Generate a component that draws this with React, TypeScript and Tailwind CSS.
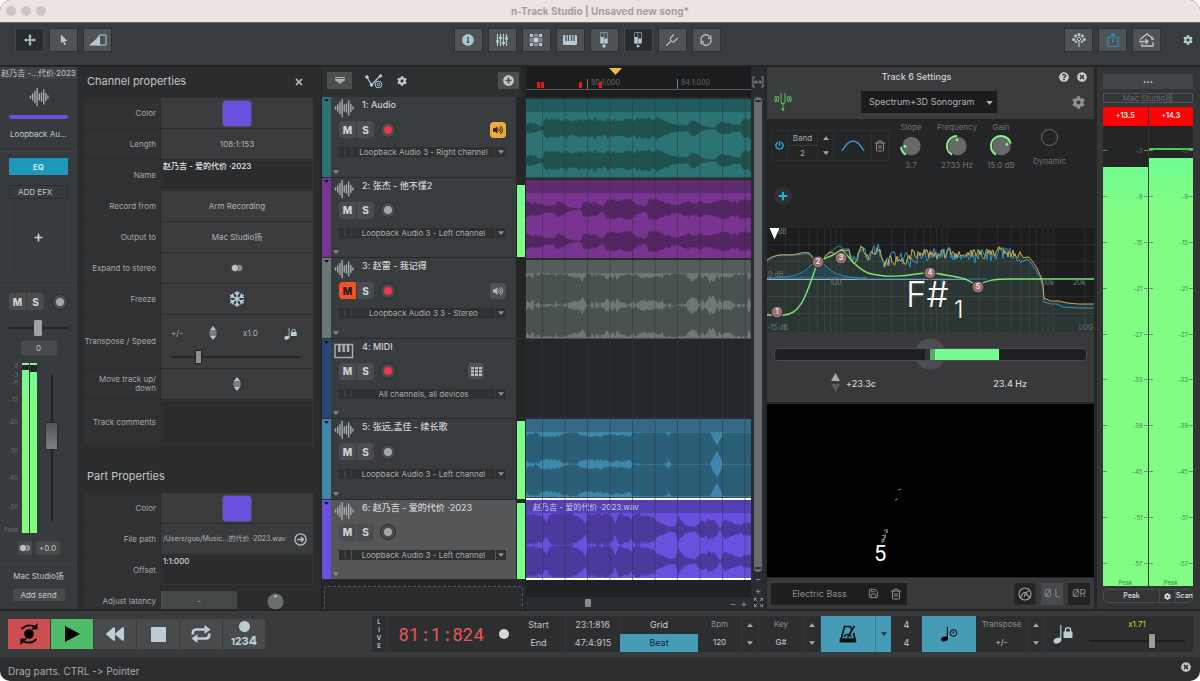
import React, { useState } from 'react';
import {
  FaBackward,
  FaCog,
  FaInfoCircle,
  FaPlus,
  FaPlusCircle,
  FaPowerOff,
  FaQuestionCircle,
  FaRegSnowflake,
  FaTimes,
  FaTimesCircle,
  FaVolumeUp,
} from 'react-icons/fa';
import { Expand, Save, Trash2 } from 'lucide-react';

type Envelope = [number, number][];

interface Track {
  id: number;
  name: string;
  input: string;
  stripe: string;
  muted?: boolean;
  armed?: boolean;
  selected?: boolean;
  midi?: boolean;
  monitor?: 'on' | 'off';
  level: number;
  clip?: {
    head: string;
    body: string;
    wave: string;
    label?: string;
    rough: number;
    envelope: Envelope;
  };
}

const tracks: Track[] = [
  {
    id: 1,
    name: 'Audio',
    input: 'Loopback Audio 3 - Right channel',
    stripe: 'bg-[#2c7473]',
    armed: true,
    monitor: 'on',
    level: 0,
    clip: {
      head: '#225d5d',
      body: '#2b7473',
      wave: '#1f5150',
      rough: 0.5,
      envelope: [[0, 6], [8, 6], [17, 2], [18, 9], [26, 12], [36, 11], [45, 8], [52, 11], [60, 9], [70, 11], [86, 10], [100, 12], [116, 10], [130, 12], [138, 9], [145, 6], [152, 4], [162, 4], [165, 9], [172, 7], [178, 3], [185, 1], [190, 1], [193, 7], [200, 7], [210, 4], [215, 3], [218, 11], [226, 12]],
    },
  },
  {
    id: 2,
    name: '张杰 - 他不懂2',
    input: 'Loopback Audio 3 - Left channel',
    stripe: 'bg-[#793592]',
    level: 90,
    clip: {
      head: '#5d2c70',
      body: '#783490',
      wave: '#532562',
      rough: 0.5,
      envelope: [[0, 10], [8, 8], [20, 4], [28, 4], [32, 9], [38, 6], [45, 2], [50, 1], [55, 1], [58, 8], [65, 8], [70, 8], [75, 4], [78, 4], [82, 11], [92, 10], [102, 13], [110, 7], [116, 4], [120, 4], [124, 12], [135, 10], [145, 6], [152, 5], [160, 8], [170, 10], [180, 8], [190, 10], [200, 10], [212, 9], [226, 11]],
    },
  },
  {
    id: 3,
    name: '赵雷 - 我记得',
    input: 'Loopback Audio 3 3 - Stereo',
    stripe: 'bg-[#6a7775]',
    muted: true,
    armed: true,
    monitor: 'off',
    level: 0,
    clip: {
      head: '#555c5c',
      body: '#6b7876',
      wave: '#4a5251',
      rough: 0.5,
      envelope: [[0, 16], [10, 18], [20, 18], [30, 17], [40, 18], [52, 13], [58, 11], [62, 19], [75, 18], [85, 13], [95, 16], [108, 17], [116, 12], [125, 13], [135, 16], [150, 19], [160, 17], [168, 8], [175, 17], [188, 8], [193, 18], [205, 12], [212, 18], [226, 17]],
    },
  },
  {
    id: 4,
    name: 'MIDI',
    input: 'All channels, all devices',
    stripe: 'bg-[#2b4677]',
    armed: true,
    midi: true,
    level: 0,
  },
  {
    id: 5,
    name: '张远,孟佳 - 续长歌',
    input: 'Loopback Audio 3 - Left channel',
    stripe: 'bg-[#3f88ab]',
    level: 98,
    clip: {
      head: '#346a88',
      body: '#3f88ab',
      wave: '#2b5e77',
      rough: 0.26,
      envelope: [[0, 14], [12, 16], [16, 11], [30, 13], [50, 18], [60, 12], [75, 13], [90, 15], [105, 12], [107, 19], [138, 18], [143, 13], [148, 20], [184, 20], [189, 8], [192, 3], [196, 11], [201, 20], [226, 19]],
    },
  },
  {
    id: 6,
    name: '赵乃吉 - 爱的代价 ·2023',
    input: 'Loopback Audio 3 - Left channel',
    stripe: 'bg-[#6b50e0]',
    selected: true,
    level: 95,
    clip: {
      head: '#563fb3',
      body: '#6a50df',
      wave: '#4c399d',
      label: '赵乃吉 - 爱的代价 ·2023.wav',
      rough: 0.5,
      envelope: [[0, 19], [14, 17], [20, 10], [25, 17], [40, 20], [52, 17], [60, 5], [62, 17], [80, 20], [90, 10], [95, 20], [105, 12], [112, 19], [125, 16], [131, 10], [136, 7], [144, 3], [150, 4], [153, 16], [160, 5], [170, 2], [175, 9], [185, 11], [191, 9], [195, 1], [200, 11], [210, 6], [216, 4], [222, 10], [226, 6]],
    },
  },
];

// small seeded generator so the waveforms stay the same on every render
const seeded = (seed: number) => {
  let s = seed;
  return () => {
    s = (s * 16807) % 2147483647;
    return s / 2147483647;
  };
};

const envelopeAt = (env: Envelope, x: number) => {
  const i = env.findIndex(([ex]) => ex >= x);
  if (i <= 0) return env[i === 0 ? 0 : env.length - 1][1];
  const [x0, y0] = env[i - 1];
  const [x1, y1] = env[i];
  return y0 + ((y1 - y0) * (x - x0)) / (x1 - x0);
};

const wavePath = (env: Envelope, rough: number, seed: number, center: number) => {
  const rand = seeded(seed * 7919);
  const top: string[] = [];
  const bottom: string[] = [];
  let group = rand();
  for (let x = 0; x <= 226; x += 1) {
    if (rand() > 0.6) group = rand() ** 2;
    const amp = envelopeAt(env, x) * (1.03 - rough * (0.6 * group + 0.4 * rand()));
    const up = Math.min(15.7, amp);
    const down = Math.min(15.7, amp * (0.92 + 0.16 * rand()));
    top.push(`${x},${(center - up).toFixed(1)}`);
    bottom.unshift(`${x},${(center + down).toFixed(1)}`);
  }
  return `M${top.join('L')}L${bottom.join('L')}Z`;
};

const spectrumPath = (seed: number, lift: number, rough: number) => {
  const rand = seeded(seed);
  const points: string[] = [];
  let last = 0;
  for (let x = 82; x <= 256; x += 1) {
    const swell = x < 125 ? 4 * Math.sin(x / 2.6) : 0;
    const dip = x > 115 && x < 145 ? 5 : 0;
    const drift = x > 225 ? -1 : 0;
    last = last * 0.4 + (rand() - 0.5) * rough;
    points.push(`${x},${(26 + lift + dip + swell + drift + last).toFixed(1)}`);
  }
  return points.join('L');
};

const yellowLine = `M0,32C8,26 14,27 22,27C30,27 36,23 42,25C47,29 49,36 53,36C57,32 60,22 66,25C70,27 73,18 77,23L${spectrumPath(41, 0, 9)}L262,29L266,34L270,40L274,49L276,56L277,70L284,73L292,73L300,75L312,76L327,76`;
const blueLine = `M0,33C8,27 14,26 22,27C30,28 36,25 42,26C46,29 49,36 53,36C57,32 60,23 65,23C69,20 73,15 76,21L${spectrumPath(97, 1, 13)}L260,31L264,35L268,41L273,49L276,60L277,74L284,76L290,76L296,79L312,80L327,80`;

const Triangle = ({ down = false, className = 'w-2 h-1' }: { down?: boolean; className?: string }) => (
  <svg viewBox="0 0 8 5" className={className} fill="currentColor">
    <path d={down ? 'M0 0h8L4 5z' : 'M0 5h8L4 0z'} />
  </svg>
);

const WaveIcon = ({ className = 'w-5 h-5' }: { className?: string }) => (
  <svg viewBox="0 0 20 20" className={className} stroke="#a9abac" strokeWidth="1.4" strokeLinecap="round">
    <path d="M1.5 9v2M3.7 7v6M5.9 4.5v11M8.1 1.5v17M10.3 7v6M12.5 6v8M14.7 3v14M16.9 6.5v7M18.9 9v2" />
  </svg>
);

const StereoIcon = () => (
  <svg viewBox="0 0 12 8" className="w-3 h-2">
    <circle cx="8" cy="4" r="3.2" fill="#8b8d8e" />
    <circle cx="4" cy="4" r="3.6" fill="#bfc1c2" stroke="#3b3c3e" strokeWidth="0.6" />
  </svg>
);

const UpDownIcon = () => (
  <svg viewBox="0 0 8 14" className="w-2 h-[14px]" fill="#b4c4cb">
    <path d="M4 0l3.4 4.4H.6zM.4 5.4h7.2v1H.4zM.4 7.6h7.2v1H.4zM4 14l3.4-4.4H.6z" />
  </svg>
);

const NoteLock = ({ className }: { className: string }) => (
  <svg viewBox="0 0 20 20" className={className} fill="#bccdd5">
    <ellipse cx="4.4" cy="16.6" rx="4" ry="2.8" transform="rotate(-20 4.4 16.6)" />
    <path d="M7.2 1h1.2v15H7.2z" />
    <rect x="10.5" y="7.6" width="9" height="6.4" rx="0.8" />
    <path d="M12.4 8V6.2a2.6 2.6 0 0 1 5.2 0V8" fill="none" stroke="#bccdd5" strokeWidth="1.4" />
  </svg>
);

const TunerIcon = () => (
  <svg viewBox="0 0 18 18" className="w-[18px] h-[18px]" fill="none" stroke="#55b65a" strokeWidth="1.1">
    <path d="M7 0v8.5a2 2 0 0 0 4 0V0M9 11v5" />
    <circle cx="9" cy="16.5" r="0.9" fill="#55b65a" />
    <path d="M4 3.2q1.4 2.8 0 5.6M14 3.2q-1.4 2.8 0 5.6M1.8 3Q-.2 6 1.800 9M16.200 3q2 3 0 6M3.400 3q-2 3 0 6M14.600 3q2 3 0 6" />
  </svg>
);

const toolIcons: Record<string, React.ReactNode> = {
  move: (
    <svg viewBox="0 0 14 14" className="w-3 h-3" fill="#b3cbd4">
      <path d="M7 0l2.200 2.800H4.800zM7 14l2.200-2.800H4.800zM0 7l2.800-2.200v4.400zM14 7l-2.800-2.200v4.400z" />
      <path d="M7 3v8M3 7h8" stroke="#b3cbd4" strokeWidth="0.8" />
      <circle cx="7" cy="7" r="1.700" />
      <circle cx="4" cy="7" r="1.300" />
      <circle cx="10" cy="7" r="1.300" />
      <circle cx="7" cy="4" r="1.300" />
      <circle cx="7" cy="10" r="1.300" />
    </svg>
  ),
  pointer: (
    <svg viewBox="0 0 10 14" className="w-2 h-3" fill="#b3cbd4">
      <path d="M1 0v11.500l2.700-2.500 2 4.500 1.800-.8-2-4.400h3.700z" />
    </svg>
  ),
  fade: (
    <svg viewBox="0 0 18 12" className="w-[18px] h-3">
      <path d="M0 11.500L11 1.500v10z" fill="#b3cbd4" />
      <path d="M9 2.500L11 1h6v10H9z" fill="none" stroke="#b3cbd4" />
    </svg>
  ),
  info: <FaInfoCircle className="w-3 h-3 text-[#a9c9d6]" />,
  mixer: (
    <svg viewBox="0 0 12 12" className="w-3 h-3" stroke="#b3cbd4" strokeWidth="1.200">
      <path d="M1.500 0v12M4.500 0v12M7.500 0v12M10.500 0v12" />
      <path d="M0 7.500h3M3 4h3M6 9h3M9 4.500h3" strokeWidth="2" />
    </svg>
  ),
  grid: (
    <svg viewBox="0 0 12 12" className="w-3 h-3" fill="#b3cbd4">
      <path d="M0 0h3v3H0zM9 0h3v3H9zM3.500 3.500h5v5h-5zM0 9h3v3H0zM9 9h3v3H9z" />
      <path d="M4 0h4v2.500H4zM0 4h2.500v4H0zM9.500 4H12v4H9.500zM4 9.500h4V12H4z" fillOpacity="0.55" />
    </svg>
  ),
  piano: (
    <svg viewBox="0 0 14 12" className="w-[14px] h-3">
      <path d="M.5 1.500h13v9H.5z" fill="#b3cbd4" stroke="#b3cbd4" />
      <path d="M3 1v6M5.500 1v6M8.500 1v6M11 1v6" stroke="#505254" strokeWidth="1.300" />
    </svg>
  ),
  recMeter: (
    <svg viewBox="0 0 10 16" className="w-[10px] h-4">
      <path d="M1.500.5h7v11h-7zM5 .5v6" fill="none" stroke="#8a9aa0" strokeWidth="0.8" />
      <path d="M1.500 5h3.300v6H1.500zM5.200 6.500h3.300V11H5.200z" fill="#b3cbd4" />
      <circle cx="5" cy="14" r="1.700" fill="#b3cbd4" />
    </svg>
  ),
  playMeter: (
    <svg viewBox="0 0 10 16" className="w-[10px] h-4">
      <path d="M1.500.5h7v11h-7zM5 .5v6" fill="none" stroke="#8a9aa0" strokeWidth="0.8" />
      <path d="M1.500 5h3.300v6H1.500zM5.200 6.500h3.300V11H5.200z" fill="#b3cbd4" />
      <path d="M3.800 12.300l3.600 1.700-3.600 1.700z" fill="#b3cbd4" />
    </svg>
  ),
  fork: (
    <svg viewBox="0 0 12 12" className="w-3 h-3" fill="none" stroke="#b3cbd4" strokeWidth="1.200">
      <path d="M.5 11.500L4.900 7.100M7.800.5L4.600 3.800Q3.700 5 4.900 7.100Q7 8.300 8.200 7.400L11.500 4.200" />
    </svg>
  ),
  loop: (
    <svg viewBox="0 0 12 12" className="w-3 h-3" fill="none" stroke="#b3cbd4" strokeWidth="1.200">
      <path d="M1.500 7.500a4.700 4.700 0 0 1 8-4.800M10.500 4.500a4.700 4.700 0 0 1-8 4.800" />
      <path d="M10.800 1.500v2.700H8M1.200 10.500V7.800H4" />
    </svg>
  ),
  tree: (
    <svg viewBox="0 0 14 14" className="w-[14px] h-[14px]" fill="#b3cbd4">
      <circle cx="7" cy="1.700" r="1.600" />
      <circle cx="3.500" cy="3" r="1.500" />
      <circle cx="10.500" cy="3" r="1.500" />
      <circle cx="1.700" cy="6.500" r="1.600" />
      <circle cx="12.300" cy="6.500" r="1.600" />
      <circle cx="4" cy="8.800" r="1.200" />
      <circle cx="10" cy="8.800" r="1.200" />
      <circle cx="7" cy="6" r="1.700" fill="none" stroke="#b3cbd4" />
      <path d="M6.400 8h1.200v6H6.400z" />
    </svg>
  ),
  share: (
    <svg viewBox="0 0 12 16" className="w-3 h-4" fill="none" stroke="#2a91bd" strokeWidth="1.200">
      <path d="M4 5.500H1v9h10v-9H8M6 10.500V1.500M3.500 4L6 1.500 8.500 4" />
    </svg>
  ),
  house: (
    <svg viewBox="0 0 16 14" className="w-4 h-[14px]" fill="none" stroke="#b9c6cb" strokeWidth="1.300">
      <path d="M1 6.500L8 .9l7 5.600M3 10v3h11V9M13 3.500V7M0 8.500h9M6.500 6L9 8.500 6.500 11" />
    </svg>
  ),
};

const ToolButton = ({ icon, label, active }: { icon: string; label: string; active?: boolean }) => (
  <button
    aria-label={label}
    className={`w-[29px] h-6 flex items-center justify-center border ${
      active ? 'bg-[#2a2b2d] border-[#45484a]' : 'bg-[#505254] border-[#2e3133]'
    }`}
  >
    {toolIcons[icon]}
  </button>
);

const RecordDot = ({ armed, label }: { armed?: boolean; label: string }) => (
  <button aria-label={label} className="w-4 h-4 rounded-full border border-[#2a2b2c] bg-[#4a4b4c] flex items-center justify-center">
    <span className={`w-2 h-2 rounded-full ${armed ? 'bg-[#ee3552]' : 'bg-[#a5a6a7]'}`} />
  </button>
);

const MuteSolo = ({ muted }: { muted?: boolean }) => (
  <div className="flex gap-px">
    <button className={`w-[17px] h-[17px] rounded-l-sm font-extrabold text-[10px] leading-4 ${muted ? 'bg-[#ee5522] text-[#231410]' : 'bg-[#4a4c4d] text-[#cfd2d3]'}`}>
      M
    </button>
    <button className="w-[17px] h-[17px] rounded-r-sm font-extrabold text-[10px] leading-4 bg-[#4a4c4d] text-[#cfd2d3]">S</button>
  </div>
);

const PropertyRow = ({ label, tall = 'h-[30px]', plain, children }: { label: string; tall?: string; plain?: boolean; children: React.ReactNode }) => (
  <div className={`flex gap-px shrink-0 ${tall}`}>
    <div className="w-[76px] bg-[#303133] flex items-center justify-end pr-1 text-right leading-[9px] text-[#a7a9aa]">{label}</div>
    <div className={`flex-1 min-w-0 flex items-center justify-center text-[#b2b4b5] ${plain ? '' : 'bg-[#3a3b3d]'}`}>{children}</div>
  </div>
);

const Toolbar = () => (
  <div className="h-[45px] shrink-0 bg-[#393c3e] border-t border-[#6a6867] border-b-2 border-b-[#222425] flex items-center justify-between pl-[15px] pr-[7px] pb-[9px]">
    <div className="flex gap-[5px] flex-1">
      <ToolButton icon="move" label="Move" active />
      <ToolButton icon="pointer" label="Select" />
      <ToolButton icon="fade" label="Fade" />
    </div>
    <div className="flex gap-[5px] mr-[34px]">
      <ToolButton icon="info" label="Info" />
      <ToolButton icon="mixer" label="Mixer" />
      <ToolButton icon="grid" label="Step grid" />
      <ToolButton icon="piano" label="Piano" />
      <ToolButton icon="recMeter" label="Recording level" />
      <ToolButton icon="playMeter" label="Playback level" active />
      <ToolButton icon="fork" label="Tuner" />
      <ToolButton icon="loop" label="Loops" />
    </div>
    <div className="flex flex-1 justify-end items-center gap-[5px]">
      <ToolButton icon="tree" label="Community" />
      <ToolButton icon="share" label="Share" />
      <ToolButton icon="house" label="Export" />
      <button aria-label="Settings" className="w-5 ml-[7px] flex justify-end text-[#b3cbd4]">
        <FaCog className="w-[10px] h-[10px]" />
      </button>
    </div>
  </div>
);

const ChannelStrip = () => (
  <aside className="w-[78px] shrink-0 bg-[#373b3d] flex flex-col items-center text-[8px] text-[#c6c8c9] border-r border-[#2c2e2f]">
    <div className="w-full h-3 bg-[#404345] leading-3 text-center whitespace-nowrap overflow-hidden">赵乃吉 -...代价·2023</div>
    <WaveIcon className="w-5 h-5 mt-2" />
    <div className="w-[59px] h-1 mt-2 rounded-sm bg-[#6b50e0]" />
    <div className="mt-[10px] leading-[10px]">Loopback Au...</div>
    <div className="w-full h-px mt-3 bg-[#3f4244]" />
    <button className="w-[59px] h-[17px] mt-[6px] bg-[#1e98b9] font-bold text-[#c8ecf5]">EQ</button>
    <button className="w-[59px] h-[14px] mt-[10px] border border-[#2b2e30] text-left pl-2">ADD EFX</button>
    <button aria-label="Add effect" className="w-[59px] h-[78px] border border-t-0 border-[#3d4042] flex items-center justify-center text-[#c5d5db]">
      <FaPlus className="w-[9px] h-[9px]" />
    </button>
    <div className="w-full h-px mt-2 bg-[#3f4244]" />
    <div className="flex items-center gap-2 mt-[7px]">
      <MuteSolo />
      <RecordDot label="Record arm" />
    </div>
    <input
      type="range"
      aria-label="Pan"
      defaultValue={49}
      className="w-[60px] h-[18px] mt-[9px] appearance-none bg-transparent bg-[linear-gradient(#222,#222)] bg-[length:100%_2px] bg-center bg-no-repeat [&::-webkit-slider-thumb]:appearance-none [&::-webkit-slider-thumb]:w-2 [&::-webkit-slider-thumb]:h-4 [&::-webkit-slider-thumb]:rounded-[1px] [&::-webkit-slider-thumb]:bg-[#a0a1a2]"
    />
    <div className="w-9 h-[14px] mt-1 bg-[#484b4c] text-center leading-[14px]">0</div>
    <div className="flex flex-1 min-h-0 w-full pt-2">
      <div className="relative w-5 text-[6px] leading-[6px] text-[#6b7072] text-right pr-[2px]">
        <span className="absolute right-[2px] top-0">0</span>
        <span className="absolute right-[2px] top-[5%]">-3</span>
        <span className="absolute right-[2px] top-[10%]">-6</span>
        <span className="absolute right-[2px] top-[20%]">-12</span>
        <span className="absolute right-[2px] top-[33%]">-20</span>
        <span className="absolute right-[2px] top-[50%]">-30</span>
        <span className="absolute right-[2px] top-[66%]">-40</span>
        <span className="absolute right-[2px] top-[83%]">-50</span>
        <span className="absolute right-[2px] bottom-0">Peak</span>
      </div>
      <div className="flex gap-px ml-[2px]">
        <div className="w-[7px] bg-[#242525] border-t-2 border-[#80fb8f] flex flex-col justify-end">
          <div className="h-[97%] bg-linear-to-b from-[#72fb98] via-[#82fd83] via-20% to-[#82fd83]" />
        </div>
        <div className="w-[7px] bg-[#242525] border-t-2 border-[#80fb8f] flex flex-col justify-end">
          <div className="h-[96%] bg-linear-to-b from-[#72fb98] via-[#82fd83] via-20% to-[#82fd83]" />
        </div>
      </div>
      <input
        type="range"
        aria-label="Volume"
        defaultValue={60}
        className="w-[13px] mt-3 mb-3 ml-[8px] [writing-mode:vertical-lr] [direction:rtl] appearance-none bg-transparent bg-[linear-gradient(#222,#222)] bg-[length:2px_100%] bg-center bg-no-repeat [&::-webkit-slider-thumb]:appearance-none [&::-webkit-slider-thumb]:w-[13px] [&::-webkit-slider-thumb]:h-7 [&::-webkit-slider-thumb]:rounded-[1px] [&::-webkit-slider-thumb]:border [&::-webkit-slider-thumb]:border-[#2b2b2b] [&::-webkit-slider-thumb]:bg-linear-to-b [&::-webkit-slider-thumb]:from-[#525455] [&::-webkit-slider-thumb]:to-[#7e8081]"
      />
    </div>
    <div className="flex gap-1 mt-2">
      <button aria-label="Stereo" className="w-[14px] h-[14px] bg-[#47494a] flex items-center justify-center"><StereoIcon /></button>
      <div className="w-6 h-[14px] bg-[#47494a] leading-[14px] text-center">+0.0</div>
    </div>
    <div className="w-full h-px mt-2 bg-[#3f4244]" />
    <div className="mt-[7px] leading-[10px]">Mac Studio扬</div>
    <button className="w-[52px] h-3 mt-2 mb-2 bg-[#484b4c] leading-3">Add send</button>
  </aside>
);

const PropertiesPanel = () => (
  <section className="w-[243px] shrink-0 bg-[#2b2c2e] pl-[6px] pr-2 overflow-hidden text-[8px]">
    <div className="h-[31px] flex items-center justify-between px-[3px] pb-[2px]">
      <h2 className="text-[11px] text-[#c3c5c6]">Channel properties</h2>
      <button aria-label="Close channel properties" className="pr-[6px] text-[#adafb0]"><FaTimes className="w-[10px] h-[10px]" /></button>
    </div>
    <div className="flex flex-col gap-px">
      <PropertyRow label="Color">
        <button aria-label="Channel color" className="w-[30px] h-[27px] border border-[#505254] bg-[#6b50e0] rounded-sm" />
      </PropertyRow>
      <PropertyRow label="Length">108:1:153</PropertyRow>
      <PropertyRow label="Name" plain>
        <textarea aria-label="Name" defaultValue="赵乃吉 - 爱的代价 ·2023" className="w-full h-full resize-none overflow-hidden px-px border border-[#333436] leading-[10px] text-[#e6e8e9] font-medium" />
      </PropertyRow>
      <PropertyRow label="Record from">Arm Recording</PropertyRow>
      <PropertyRow label="Output to">Mac Studio扬</PropertyRow>
      <PropertyRow label="Expand to stereo"><StereoIcon /></PropertyRow>
      <PropertyRow label="Freeze">
        <button aria-label="Freeze" className="text-[#b4d0da]"><FaRegSnowflake className="w-4 h-4" /></button>
      </PropertyRow>
      <PropertyRow label="Transpose / Speed" tall="h-[53px]">
        <div className="w-full pl-[10px] pr-[13px] pt-[7px] flex flex-col">
          <div className="flex items-center justify-between pr-[3px] h-4">
            <span>+/-</span>
            <UpDownIcon />
            <span>x1.0</span>
            <NoteLock className="w-[13px] h-[13px]" />
          </div>
          <input
            type="range"
            aria-label="Speed"
            defaultValue={20}
            className="w-full h-4 mt-2 appearance-none bg-transparent bg-[linear-gradient(#242526,#242526)] bg-[length:100%_2px] bg-center bg-no-repeat [&::-webkit-slider-thumb]:appearance-none [&::-webkit-slider-thumb]:w-[7px] [&::-webkit-slider-thumb]:h-[14px] [&::-webkit-slider-thumb]:rounded-[1px] [&::-webkit-slider-thumb]:border [&::-webkit-slider-thumb]:border-[#222] [&::-webkit-slider-thumb]:bg-[#8f9091]"
          />
        </div>
      </PropertyRow>
      <PropertyRow label="Move track up/ down"><UpDownIcon /></PropertyRow>
      <PropertyRow label="Track comments" tall="h-[45px]" plain>
        <textarea aria-label="Track comments" className="w-full h-full resize-none border border-[#333436]" />
      </PropertyRow>
    </div>
    <h2 className="mt-[23px] mb-[9px] h-4 leading-4 px-[3px] text-[11px] text-[#c3c5c6]">Part Properties</h2>
    <div className="flex flex-col gap-px">
      <PropertyRow label="Color">
        <button aria-label="Part color" className="w-[30px] h-[27px] border border-[#505254] bg-[#6b50e0] rounded-sm" />
      </PropertyRow>
      <PropertyRow label="File path">
        <div className="flex w-full items-center justify-between pl-[2px] pr-[6px] whitespace-nowrap">
          <span className="text-[7px]">/Users/guo/Music...的代价 ·2023.wav</span>
          <button aria-label="Open file location">
            <svg viewBox="0 0 14 14" className="block w-[13px] h-[13px]" fill="none" stroke="#b9c3c7" strokeWidth="1.400">
              <circle cx="7" cy="7" r="6" />
              <path d="M3.500 7h6.500M7.500 4.300L10.300 7 7.500 9.700" />
            </svg>
          </button>
        </div>
      </PropertyRow>
      <PropertyRow label="Offset" plain>
        <textarea aria-label="Offset" defaultValue="1:1:000" className="w-full h-full resize-none overflow-hidden px-px border border-[#333436] leading-[10px] text-[#e6e8e9]" />
      </PropertyRow>
      <PropertyRow label="Adjust latency" plain>
        <div className="w-1/2 h-6 mt-1 bg-[#454849] text-center leading-5">-</div>
        <div className="w-1/2 flex justify-center">
          <svg viewBox="0 0 18 18" className="w-[17px] h-[17px]">
            <circle cx="9" cy="9" r="8.500" fill="#6b6d6e" />
            <circle cx="9" cy="3.500" r="1.300" fill="#7bf08a" />
          </svg>
        </div>
      </PropertyRow>
    </div>
  </section>
);

const TrackHeader = ({ track }: { track: Track }) => (
  <div className="flex flex-1 min-h-0 border-b border-[#292b2c]">
    <div className={`w-[9px] shrink-0 flex flex-col items-center pt-[2px] ${track.stripe}`}>
      <span className="text-[#14181b]"><Triangle down className="w-[5px] h-[3px]" /></span>
    </div>
    <div className={`flex-1 min-w-0 flex flex-col pl-[2px] pr-1 ${track.selected ? 'bg-[#555658]' : 'bg-[#393c3e]'}`}>
      <div className="flex gap-2 h-[22px] pl-px">
        {track.midi ? (
          <svg viewBox="0 0 20 16" className="w-5 h-4 mt-1" fill="none" stroke="#a9abac" strokeWidth="1.500">
            <rect x="1" y="1.500" width="17.500" height="13" />
            <path d="M5.300 2v7M9.700 2v7M14 2v7" strokeWidth="2.500" />
          </svg>
        ) : (
          <WaveIcon className="w-5 h-5 mt-px" />
        )}
        <span className="text-[9px] leading-4 font-medium text-[#d0d2d3] whitespace-nowrap">{track.id}: {track.name}</span>
      </div>
      <div className="flex items-center h-[21px] pl-[6px] pr-[6px]">
        <MuteSolo muted={track.muted} />
        <span className="flex ml-[6px]"><RecordDot armed={track.armed} label={`Arm track ${track.id}`} /></span>
        {track.monitor && (
          <button
            aria-label="Input monitor"
            className={`ml-auto w-4 h-4 rounded-sm flex items-center justify-center ${track.monitor === 'on' ? 'bg-[#ecae36] text-[#33230a]' : 'bg-[#4f5152] text-[#b6b8b9]'}`}
          >
            <FaVolumeUp className="w-[10px] h-[10px]" />
          </button>
        )}
        {track.midi && (
          <button aria-label="Step sequencer" className="ml-auto mr-[22px] w-4 h-4 rounded-sm bg-[#4f5152] flex items-center justify-center">
            <svg viewBox="0 0 11 9" className="w-[11px] h-[9px]" fill="#bcbebf">
              <path d="M0 0h3v2.300H0zM4 0h3v2.300H4zM8 0h3v2.300H8zM0 3.300h3v2.300H0zM4 3.300h3v2.300H4zM8 3.300h3v2.300H8zM0 6.600h3v2.300H0zM4 6.600h3v2.300H4zM8 6.600h3v2.300H8z" />
            </svg>
          </button>
        )}
      </div>
      <div className="flex h-[10px] mt-[7px] ml-[6px] mr-[6px] gap-px text-[8px] leading-[10px] text-[#abadae]">
        <button aria-label="Channel config" className="w-3 bg-[#2f3031] text-[6px] leading-[9px] text-[#77797a] text-center">|</button>
        <button className="flex-1 bg-[#2f3031] whitespace-nowrap">{track.input}</button>
        <button aria-label="Choose input" className="w-[10px] bg-[#2f3031] flex items-center justify-center text-[#8e9091]"><Triangle down className="w-[6px] h-[4px]" /></button>
      </div>
      <span className="mt-auto mb-[3px] text-[#8a8c8d]"><Triangle down className="w-[6px] h-[4px]" /></span>
    </div>
    <div className="w-[9px] shrink-0 pl-px bg-[#242625] flex flex-col justify-end">
      {track.level > 0 && (
        <div className="bg-linear-to-b from-[#78fc92] to-[#82fd83]" style={{ height: `${track.level}%` }} />
      )}
    </div>
  </div>
);

const TrackList = () => (
  <section className="w-[204px] shrink-0 bg-[#242627] flex flex-col border-l border-[#1f2122]">
    <div className="h-[30px] shrink-0 flex items-center bg-[#2d3031] pl-[5px] pr-[2px] pb-[3px] mr-1">
      <button aria-label="Track menu" className="w-[25px] h-[17px] bg-[#4c4f50] flex items-center justify-center">
        <svg viewBox="0 0 10 7" className="w-[10px] h-[7px]" fill="#a9abac"><path d="M0 0h10v1.200H0zM0 2h10v1.500L6.500 5.500 5 7 3.500 5.500 0 3.500z" /></svg>
      </button>
      <button aria-label="Automation" className="ml-3">
        <svg viewBox="0 0 20 16" className="w-[20px] h-4" fill="none" stroke="#b3cbd4">
          <path d="M3 4l4.500 8L16 3" strokeWidth="1.200" />
          <circle cx="3" cy="4" r="1.300" fill="#b3cbd4" />
          <circle cx="7.500" cy="12" r="1.300" fill="#b3cbd4" />
          <circle cx="16.500" cy="3" r="1.300" fill="#b3cbd4" />
          <circle cx="14.500" cy="11.500" r="3.300" fill="#2d3031" />
          <circle cx="14.500" cy="11.500" r="1.300" />
        </svg>
      </button>
      <button aria-label="Track settings" className="ml-[13px] text-[#b3cbd4]"><FaCog className="w-[10px] h-[10px]" /></button>
      <button aria-label="Add track" className="ml-auto w-[21px] h-[17px] bg-[#4c4f50] flex items-center justify-center text-[#c5c7c8]"><FaPlusCircle className="w-[11px] h-[11px]" /></button>
    </div>
    {tracks.map(track => <TrackHeader key={track.id} track={track} />)}
    <div className="h-[29px] shrink-0 pt-[6px] px-[2px]">
      <div className="h-full rounded-t-sm border border-b-0 border-dashed border-[#55585a] bg-[#292b2c]" />
    </div>
  </section>
);

const Clip = ({ track }: { track: Track }) => {
  const clip = track.clip;
  if (!clip) return <div className="flex-1 min-h-0 bg-[#25282a]" />;
  return (
    <div className={`relative flex-1 min-h-0 ${track.selected ? 'border-y-2 border-white' : 'border-t-2 border-[#2a2c2d]'}`}>
      <svg viewBox="0 0 226 78" preserveAspectRatio="none" className="block w-full h-full">
        <rect width="226" height="78" fill={clip.body} />
        <path d={wavePath(clip.envelope, clip.rough, track.id, 29)} fill={clip.wave} />
        <path d={wavePath(clip.envelope, clip.rough, track.id, 61)} fill={clip.wave} />
        <rect width="226" height="13" fill={clip.head} />
      </svg>
      {clip.label && <span className="absolute left-[7px] top-0 text-[8px] leading-[15px] text-[#cdc4f2] whitespace-nowrap">{clip.label}</span>}
    </div>
  );
};

const Timeline = () => (
  <section className="flex-1 min-w-0 flex bg-[#242627]">
    <div className="flex-1 min-w-0 flex flex-col pl-px">
      <svg className="w-full h-[30px] shrink-0 bg-[#1b1c1e]">
        <path d="M0 22.500h2000" stroke="#57595b" />
        <path d="M61.500 12v10M151.500 12v10" stroke="#7b7d7f" />
        <text x="65" y="18" fontSize="7" fill="#66696b">80:1:000</text>
        <text x="155" y="18" fontSize="7" fill="#66696b">84:1:000</text>
        <path d="M11 15h3v6h-3zM15 15h3v6h-3zM53 15h3v6h-3zM73 15h3v6h-3z" fill="#f01414" />
        <path d="M83 1h13l-6.500 7z" fill="#f6b745" />
      </svg>
      <div className="relative flex-1 min-h-0 flex flex-col">
        {tracks.map(track => <Clip key={track.id} track={track} />)}
        <svg className="absolute inset-0 w-full h-full pointer-events-none">
          <defs>
            <pattern id="bars" width="22.500" height="100" patternUnits="userSpaceOnUse" x="16">
              <path d="M.5 0v100" stroke="#2e3336" strokeOpacity="0.500" />
            </pattern>
          </defs>
          <rect width="100%" height="100%" fill="url(#bars)" />
        </svg>
      </div>
      <div className="h-[17px] shrink-0 bg-[#1e2122]" />
      <div className="h-3 shrink-0 flex items-center bg-[#292d2f] text-[10px] leading-[10px] text-[#8d9092]">
        <div className="w-[6px] h-2 ml-[59px] rounded-[1px] bg-[#85898b]" />
        <button aria-label="Zoom out horizontally" className="ml-auto">−</button>
        <button aria-label="Zoom in horizontally" className="ml-1 mr-1">+</button>
      </div>
    </div>
    <div className="w-[14px] shrink-0 flex flex-col items-center bg-[#292c2e] text-[10px] text-[#8d9092]">
      <button aria-label="Fit to window" className="h-[30px] shrink-0 flex items-center">
        <svg viewBox="0 0 12 12" className="w-3 h-3" fill="none" stroke="#888b8d">
          <path d="M3 1H1v10h2M9 1h2v10H9M2.500 6h7M4.500 4l-2 2 2 2M7.500 4l2 2-2 2" />
        </svg>
      </button>
      <div className="flex-1 w-2 rounded-sm bg-[#666c70] flex flex-col justify-between items-center py-[3px]">
        <span className="w-[6px] h-[2px] bg-[#2c2f31]" />
        <span className="w-[6px] h-[2px] bg-[#2c2f31]" />
      </div>
      <button aria-label="Zoom out vertically" className="leading-[12px]">−</button>
      <button aria-label="Zoom in vertically" className="leading-[12px]">+</button>
      <button aria-label="Full screen" className="h-[13px] flex items-center"><Expand className="w-[11px] h-[11px]" /></button>
    </div>
  </section>
);

const arc = (angle: number, r: number) => {
  const a = ((angle - 90) * Math.PI) / 180;
  return [12 + r * Math.cos(a), 12 + r * Math.sin(a)];
};

const Knob = ({ label, value, angle }: { label: string; value: string; angle: number }) => {
  const [sx, sy] = arc(-150, 10);
  const [ex, ey] = arc(angle, 10);
  const [dx, dy] = arc(angle, 6);
  return (
    <div className="w-11 flex flex-col items-center whitespace-nowrap">
      <span>{label}</span>
      <svg viewBox="0 0 24 24" className="w-6 h-6 my-px" role="img" aria-label={`${label} knob`}>
        <circle cx="12.500" cy="12" r="9.200" fill="#66686a" />
        <path d={`M${sx} ${sy}A10 10 0 ${angle > 30 ? 1 : 0} 1 ${ex} ${ey}`} fill="none" stroke="#89f58c" strokeWidth="2" />
        <circle cx={dx} cy={dy} r="1.400" fill="#89f58c" />
      </svg>
      <span>{value}</span>
    </div>
  );
};

const nodes = [
  { n: 1, x: 10, y: 84 },
  { n: 2, x: 51, y: 34 },
  { n: 3, x: 74, y: 30 },
  { n: 4, x: 163, y: 45 },
  { n: 5, x: 211, y: 59 },
];

const decades = [-32, 74, 180, 286];

const Spectrum = () => (
  <svg viewBox="0 0 327 104" className="block w-full bg-[#1c1d1f]">
    <path d={`${yellowLine}V104H0Z`} fill="#2b3534" />
    <g stroke="#ffffff" strokeOpacity="0.070">
      {decades.map(start => [1, 2, 3, 4, 5, 6, 7, 8, 9].map(k => (
        <path key={`${start}-${k}`} d={`M${(start + 106 * Math.log10(k)).toFixed(1)} 0V104`} />
      )))}
      <path d="M0 16.500H327M0 33.500H327M0 68.500H327M0 85.500H327" />
    </g>
    <path d="M0 50C25 50 36 46 43 38Q51 28 59 38C66 46 78 50 100 50Z" fill="#235063" fillOpacity="0.600" stroke="#2f8bb0" />
    <path d="M0 51.500H200" stroke="#a8b4b4" strokeWidth="1.200" />
    <path d="M90 51H220" stroke="#2f7fa5" strokeWidth="1.200" />
    <path d={blueLine} fill="none" stroke="#2e94c8" />
    <path d={yellowLine} fill="none" stroke="#cba845" />
    <path d="M0 87H17C37 87 42 55 51 34C58 30 66 28 75 22C81 27 88 40 101 45C120 51 145 47 163 44C175 47 188 48 198 51C205 54 207 57 212 57C220 52 228 51 241 51H327" fill="none" stroke="#7de673" strokeWidth="1.400" />
    <g fontSize="7" fill="#69807d">
      <text x="11" y="6">dB</text>
      <text x="1" y="49">0 dB</text>
      <text x="63" y="57">100</text>
      <text x="173" y="57">1k</text>
      <text x="276" y="57">10k</text>
      <text x="306" y="57">20k</text>
      <text x="0" y="102">-15 dB</text>
      <text x="312" y="102">LOG</text>
    </g>
    <path d="M2.500 0h10L7.500 11.500z" fill="#fff" />
    <g fill="#fbfaf5" fontWeight="300">
      <text x="139" y="79" fontSize="35">F#</text>
      <text x="187" y="90" fontSize="24">1</text>
    </g>
    {nodes.map(({ n, x, y }) => (
      <g key={n}>
        <circle cx={x} cy={y} r="6" fill="#936f70" stroke="#2b2224" />
        <text x={x} y={y + 2} fontSize="7" fontWeight="700" textAnchor="middle" fill="#f2e9e9">{n}</text>
      </g>
    ))}
  </svg>
);

const TrackSettings = () => {
  const [band, setBand] = useState(2);
  return (
    <section className="w-[331px] shrink-0 px-[2px] bg-[#242627] flex flex-col">
      <div className="h-[52px] shrink-0 bg-[#3a3b3d] px-[7px] flex flex-col">
        <div className="flex items-center h-[19px]">
          <h2 className="flex-1 text-center text-[9px] font-medium text-[#cfd1d2]">Track 6 Settings</h2>
          <div className="flex gap-2 text-[#c9cbcc]">
            <button aria-label="Help"><FaQuestionCircle className="block w-[10px] h-[10px]" /></button>
            <button aria-label="Close track settings"><FaTimesCircle className="block w-[10px] h-[10px]" /></button>
          </div>
        </div>
        <div className="flex items-center justify-between h-8">
          <TunerIcon />
          <div className="relative mr-[6px]">
            <select aria-label="Display mode" className="block appearance-none w-[136px] h-[22px] bg-[#1b1c1e] pl-2 text-[9px] text-[#b0b2b3]">
              <option>Spectrum+3D Sonogram</option>
            </select>
            <span className="absolute right-1 top-[10px] text-[#b0b2b3] pointer-events-none"><Triangle down className="block w-[7px] h-1" /></span>
          </div>
          <button aria-label="Analyzer options" className="text-[#8f9192] pr-[2px]"><FaCog className="w-[13px] h-[13px]" /></button>
        </div>
      </div>
      <div className="h-[109px] shrink-0 bg-[#242527] px-1 pt-[2px] text-[8px] text-[#6f7172]">
        <div className="flex items-start">
          <div className="flex h-[31px] mt-[9px] border border-[#2c2d2f] divide-x divide-[#2f3032]">
            <button aria-label="Band on" className="w-4 flex items-center justify-center text-[#27a8e0]"><FaPowerOff className="w-[9px] h-[9px]" /></button>
            <div className="w-[30px] flex flex-col divide-y divide-[#38393b] text-center text-[8px] leading-[14px] text-[#a6a8a9]">
              <span>Band</span>
              <span>{band}</span>
            </div>
            <div className="w-4 flex flex-col items-center justify-around text-[#a0a2a3]">
              <button aria-label="Next band" onClick={() => setBand(b => Math.min(5, b + 1))}><Triangle className="w-[6px] h-1" /></button>
              <button aria-label="Previous band" onClick={() => setBand(b => Math.max(1, b - 1))}><Triangle down className="w-[6px] h-1" /></button>
            </div>
            <button aria-label="Band shape" className="w-[38px] flex items-center justify-center">
              <svg viewBox="0 0 24 12" className="w-6 h-3" fill="none" stroke="#27a1d6" strokeWidth="1.400"><path d="M1 11Q12-9 23 11" /></svg>
            </button>
            <button aria-label="Delete band" className="w-4 flex items-center justify-center text-[#8a8c8d]"><Trash2 className="w-3 h-3" /></button>
          </div>
          <div className="flex">
            <Knob label="Slope" value="3.7" angle={-95} />
            <span className="w-[2px]" />
            <Knob label="Frequency" value="2733 Hz" angle={0} />
            <Knob label="Gain" value="15.0 dB" angle={75} />
          </div>
          <label className="ml-[10px] flex flex-col items-center gap-[10px] mt-[8px] leading-[10px]">
            <input type="radio" name="dynamic" className="appearance-none w-[17px] h-[17px] rounded-full border border-[#6f7172]" />
            Dynamic
          </label>
        </div>
        <button aria-label="Add band" className="w-[18px] h-[18px] ml-[3px] mt-4 rounded-full bg-[#303133] text-[#27b4ee] flex items-center justify-center">
          <FaPlus className="w-[10px] h-[10px]" />
        </button>
      </div>
      <Spectrum />
      <div className="h-[70px] shrink-0 bg-[#38393b] mb-[2px]">
        <svg viewBox="0 0 327 44" className="block w-full">
          <circle cx="163" cy="22" r="15.500" fill="#4b4d57" />
          <rect x="7.500" y="16.500" width="312" height="12" rx="3" fill="#1f2022" stroke="#4a4b55" />
          <rect x="158" y="17" width="5" height="11" fill="#333436" />
          <rect x="163" y="17" width="6" height="11" fill="#57a76a" />
          <rect x="168" y="17" width="64" height="11" fill="#74fd8e" />
        </svg>
        <div className="flex items-center text-[9px] font-medium leading-4 text-[#d3d5d6]">
          <div className="flex flex-col gap-[3px] ml-16 mr-[6px] -mt-1">
            <button aria-label="Pitch up" className="text-[#a9abac]">
              <svg viewBox="0 0 9 8" className="block w-[9px] h-2" fill="currentColor"><path d="M4.500 0L9 8H0z" /></svg>
            </button>
            <button aria-label="Pitch down" className="text-[#595b5c]">
              <svg viewBox="0 0 9 8" className="block w-[9px] h-2" fill="currentColor"><path d="M4.500 8L9 0H0z" /></svg>
            </button>
          </div>
          <span>+23.3c</span>
          <span className="ml-auto mr-[67px]">23.4 Hz</span>
        </div>
      </div>
      <div className="flex-1 min-h-0">
        <svg viewBox="0 0 327 173" preserveAspectRatio="xMidYMid slice" className="block w-full h-full bg-black">
          <path d="M131 86l3-1M128 96l3-1" stroke="#8a8a8a" strokeWidth="0.900" />
          <g fill="none" stroke="#9a9a9a" strokeWidth="0.900">
            <path d="M117 126.500l3.500-1-1.500 2.500 2-.5-2.500 2M115 131.500l4-.5-2 2.500 2-.5-3.500 2.500M114 136l3.500-.5-3 2.500 3-.5" />
          </g>
          <text x="107" y="157" fontSize="22" fill="#fff" fontFamily="Roboto, sans-serif">5</text>
        </svg>
      </div>
      <div className="h-8 shrink-0 bg-[#38393b] border-t border-[#242627] flex items-center px-1 gap-[5px] text-[#8c8e8f]">
        <div className="flex items-center w-[136px] h-[22px] pr-[5px] bg-[#1d1e20]">
          <span className="flex-1 text-center text-[9px]">Electric Bass</span>
          <button aria-label="Save preset"><Save className="w-[11px] h-[11px]" /></button>
          <button aria-label="Delete preset" className="ml-[11px]"><Trash2 className="w-3 h-3" /></button>
        </div>
        <button aria-label="Phase" className="ml-auto w-[22px] h-[22px] bg-[#222325] border border-[#2b2c2e] flex items-center justify-center">
          <svg viewBox="0 0 14 14" className="w-[14px] h-[14px]" fill="none" stroke="#9b9d9e" strokeWidth="1.200">
            <circle cx="7" cy="7" r="6" />
            <path d="M2.500 11Q5 3.500 8 6.500t4 5M6 10q2-6 5-6" />
          </svg>
        </button>
        <button className="w-[22px] h-[22px] bg-[#484a4c] text-[10px]">Ø L</button>
        <button className="w-[22px] h-[22px] bg-[#222325] text-[10px]">ØR</button>
      </div>
    </section>
  );
};

const meterMarks = ['-3', '-9', '-15', '-21', '-27', '-33', '-39', '-45', '-51', '-57'];

const MeterColumn = ({ fill, peak }: { fill: string; peak?: boolean }) => (
  <div className="relative flex-1 flex flex-col justify-end bg-[#242625]">
    {peak && <div className="absolute top-[22px] inset-x-0 h-[2px] bg-[#52c657]" />}
    <div className={`${fill} bg-linear-to-b from-[#70fd92] via-[#82fd83] via-12% to-[#82fd83]`} />
    <div className="absolute inset-0 pt-[2px] flex flex-col text-[6px] text-[#3f8a48]">
      {meterMarks.map(mark => (
        <div key={mark} className="flex-1 flex items-center">
          <span className="w-1 h-px bg-[#5a9a62]" />
          <span className="ml-auto mr-px">{mark}</span>
          <span className="w-1 h-px bg-[#5a9a62]" />
        </div>
      ))}
      <span className="absolute bottom-0 inset-x-0 text-center leading-[6px]">Peak</span>
    </div>
  </div>
);

const MasterMeter = () => (
  <aside className="flex-none w-[104px] bg-[#333537] border-l border-[#242627] pl-[6px] pr-[7px] pt-[7px] pb-[6px] flex flex-col text-[7px]">
    <button aria-label="Master menu" className="h-[15px] shrink-0 pb-[5px] bg-[#424547] text-[10px] leading-[10px] font-bold text-[#c9cbcc]">...</button>
    <button className="h-[10px] shrink-0 mt-1 border border-[#535658] rounded-[1px] text-[8px] leading-[8px] text-[#66696b]">Mac Studio扬</button>
    <div className="flex gap-px h-[19px] shrink-0 mt-1 text-center leading-[18px] font-bold text-[#ffe5e5]">
      <span className="flex-1 bg-[#fd0202]">+13.5</span>
      <span className="flex-1 bg-[#fd0202]">+14.3</span>
    </div>
    <div className="flex flex-1 min-h-0 gap-px">
      <MeterColumn fill="h-[91%]" />
      <MeterColumn fill="h-[93%]" peak />
    </div>
    <div className="flex h-[14px] shrink-0 mt-[3px] border border-[#4a4c4e] rounded-sm divide-x divide-[#4a4c4e] text-[#dfe1e2] font-medium">
      <button className="flex-1">Peak</button>
      <button aria-label="Meter settings" className="w-4 flex items-center justify-center"><FaCog className="w-[7px] h-[7px]" /></button>
      <button className="w-4">Scan</button>
    </div>
  </aside>
);

const transportButton = 'w-[42px] h-[30px] flex items-center justify-center bg-[#484a4c] text-[#bccdd5]';

const Stepper = ({ label, value, width }: { label: string; value: string; width: string }) => (
  <>
    <div className={`${width} flex flex-col text-center text-[8px] leading-[17px]`}>
      <span className="flex-1 text-[#8f9192]">{label}</span>
      <span className="flex-1 text-[#d0d2d3]">{value}</span>
    </div>
    <div className="w-[18px] flex flex-col items-center justify-around text-[#a5a7a8] border-x border-[#333537]">
      <button aria-label={`${label} up`}><Triangle className="w-[6px] h-1" /></button>
      <button aria-label={`${label} down`}><Triangle down className="w-[6px] h-1" /></button>
    </div>
  </>
);

const Transport = () => (
  <div className="h-12 shrink-0 bg-[#393a3c] border-t-2 border-[#222425] flex items-center justify-between pl-2 pr-[7px] text-[9px]">
    <div className="flex gap-px">
      <button aria-label="Record" className="w-[42px] h-[30px] flex items-center justify-center bg-[#cb4e51]">
        <svg viewBox="0 0 22 22" className="w-[22px] h-[22px]" fill="none" stroke="#000" strokeWidth="1.800">
          <circle cx="11" cy="11" r="4.800" fill="#000" stroke="none" />
          <path d="M3.500 6Q10-.5 18 4.500M18.500 16Q12 22.500 4 17.500" />
          <path d="M19.500 0v6.500H13zM2.500 22v-6.500H9z" fill="#000" stroke="none" />
        </svg>
      </button>
      <button aria-label="Play" className="w-[42px] h-[30px] flex items-center justify-center bg-[#4dbd6a]">
        <svg viewBox="0 0 15 16" className="w-[15px] h-4"><path d="M0 0l15 8L0 16z" /></svg>
      </button>
      <button aria-label="Rewind" className={transportButton}><FaBackward className="w-[18px] h-[18px]" /></button>
      <button aria-label="Stop" className={transportButton}><span className="w-[15px] h-[15px] bg-[#bccdd5]" /></button>
      <button aria-label="Loop" className={transportButton}>
        <svg viewBox="0 0 20 18" className="w-5 h-[18px]" fill="none" stroke="#bccdd5" strokeWidth="2.700">
          <path d="M1.800 9.500V8q0-3.500 3.500-3.500H15M18.200 8.500V10q0 3.500-3.500 3.500H5" />
          <path d="M13.500 0l6 4.500-6 4.500zM6.500 9l-6 4.500 6 4.500z" fill="#bccdd5" stroke="none" />
        </svg>
      </button>
      <button aria-label="Count in" className="w-[42px] h-[30px] flex flex-col items-center justify-center bg-[#484a4c] text-[#bccdd5] leading-[11px]">
        <span className="w-[11px] h-[11px] rounded-full bg-[#bccdd5] shrink-0" />
        <span className="font-extrabold mt-[3px]"><span className="text-[9px]">1</span><span className="text-[10px]">2</span><span className="text-[11px]">3</span><span className="text-[12px]">4</span></span>
      </button>
    </div>
    <div className="flex h-9 bg-[#2d2e30]">
      <button aria-label="Live mode" className="w-[15px] border-r border-[#393a3c] flex flex-col items-center justify-center text-[6px] leading-[8px] font-bold text-[#9ec9c6]">
        {['L', 'I', 'V', 'E'].map(letter => <span key={letter}>{letter}</span>)}
      </button>
      <div className="w-[125px] flex items-center justify-between pl-[11px] pr-[3px]">
        <span className="font-['Roboto_Mono','Liberation_Mono',monospace] text-[18px] leading-[26px] text-[#ea565b]">81:1:824</span>
        <span className="w-[10px] h-[10px] rounded-full bg-[#d5d6d7]" />
      </div>
      <div className="grid grid-cols-2 w-[108px] text-center leading-[18px] text-[#c5c7c8] divide-x divide-[#333537]">
        <span>Start</span>
        <span>23:1:816</span>
        <span>End</span>
        <span>47:4:915</span>
      </div>
      <div className="w-[78px] flex flex-col text-center leading-[18px]">
        <button className="h-[18px] text-[#d0d2d3]">Grid</button>
        <button className="h-[18px] bg-[#469cb6] text-[#0d2a35]">Beat</button>
      </div>
      <Stepper label="Bpm" value="120" width="w-[43px]" />
      <Stepper label="Key" value="G#" width="w-[44px]" />
      <button aria-label="Metronome" className="w-[54px] bg-[#469cb6] flex items-center justify-center">
        <svg viewBox="0 0 18 18" className="w-[18px] h-[18px]" fill="none" stroke="#0b1013" strokeWidth="1.700">
          <path d="M1.500 16.500L5.500 1.500h6l1 3M14.500 8l2 8.500h-15M8.500 12.500L15.500 1" />
          <path d="M1.500 14h14.500v2.500H1.500z" fill="#0b1013" />
          <path d="M5 12a4 4 0 0 1 7.500 0" strokeWidth="1.200" />
        </svg>
      </button>
      <button aria-label="Metronome options" className="w-4 bg-[#469cb6] border-l border-[#3a7f95] flex items-center justify-center text-[#23343b]"><Triangle down className="w-[6px] h-1" /></button>
      <div className="w-[31px] text-center leading-[18px] text-[#d0d2d3] flex flex-col">
        <span>4</span>
        <span>4</span>
      </div>
      <button aria-label="Tempo sync" className="w-[54px] bg-[#469cb6] flex items-center justify-center">
        <svg viewBox="0 0 18 18" className="w-[18px] h-[18px]">
          <ellipse cx="4.500" cy="14" rx="3.500" ry="2.400" transform="rotate(-15 4.500 14)" />
          <path d="M6.800 2h1.200v12H6.800z" />
          <circle cx="13.500" cy="8" r="3.300" fill="none" stroke="#000" />
          <path d="M13.500 6v2.300h-1.200" fill="none" stroke="#000" strokeWidth="0.800" />
        </svg>
      </button>
      <Stepper label="Transpose" value="+/-" width="w-[51px]" />
      <button aria-label="Lock pitch" className="w-9 flex items-center justify-center"><NoteLock className="w-5 h-5" /></button>
      <label className="w-[112px] flex flex-col items-center text-[8px] leading-4 text-[#d6d212]">
        x1.71
        <input
          type="range"
          defaultValue={67}
          className="w-[96px] h-[18px] appearance-none bg-transparent bg-[linear-gradient(#1d1e1f,#1d1e1f)] bg-[length:100%_2px] bg-center bg-no-repeat [&::-webkit-slider-thumb]:appearance-none [&::-webkit-slider-thumb]:w-2 [&::-webkit-slider-thumb]:h-4 [&::-webkit-slider-thumb]:rounded-[1px] [&::-webkit-slider-thumb]:border [&::-webkit-slider-thumb]:border-[#222] [&::-webkit-slider-thumb]:bg-[#9a9b9c]"
        />
      </label>
    </div>
  </div>
);

const App = () => {
  return (
    <div className="h-screen flex flex-col overflow-hidden rounded-[10px] bg-[#2c2d2f] font-[Inter,'Noto_Sans_CJK_SC',sans-serif] [font-variant-ligatures:none]">
      <header className="h-[22px] shrink-0 bg-[#ece3e2] flex items-center px-[6px]">
        <div className="flex gap-[5px] w-20">
          <span className="w-[10px] h-[10px] rounded-full bg-[#cfc4c4]" />
          <span className="w-[10px] h-[10px] rounded-full bg-[#cfc4c4]" />
          <span className="w-[10px] h-[10px] rounded-full bg-[#cfc4c4]" />
        </div>
        <h1 className="flex-1 text-center text-[10px] font-bold text-[#a69c9b]">n-Track Studio | Unsaved new song*</h1>
        <span className="w-20" />
      </header>
      <Toolbar />
      <main className="flex flex-1 min-h-0">
        <ChannelStrip />
        <PropertiesPanel />
        <TrackList />
        <Timeline />
        <TrackSettings />
        <MasterMeter />
      </main>
      <Transport />
      <footer className="h-6 shrink-0 flex items-center justify-between pl-2 pr-[9px] text-[10px] text-[#a9abac]">
        <span className="pt-1">Drag parts. CTRL -&gt; Pointer</span>
        <button aria-label="Dismiss hint" className="text-[#c3c5c6] pb-1"><FaTimesCircle className="block w-[10px] h-[10px]" /></button>
      </footer>
    </div>
  );
};

export default App;
